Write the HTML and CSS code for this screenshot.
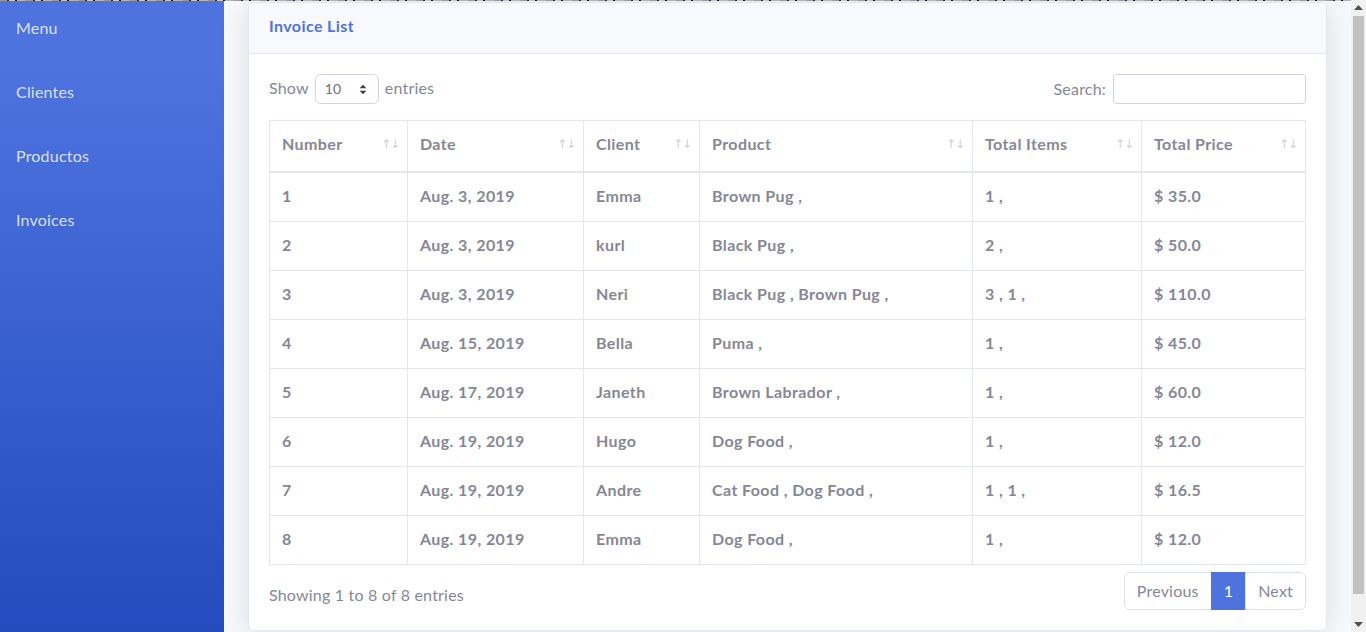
FILE: index.html
```html
<!DOCTYPE html>
<html lang="en">
<head>
<meta charset="utf-8">
<title>Invoice List</title>
<link rel="stylesheet" href="styles.css">
</head>
<body>
<div class="topline"></div>
<div class="viewport">
<div class="wrapper">
  <nav class="sidebar">
    <a class="nav-link" href="#">Menu</a>
    <a class="nav-link" href="#">Clientes</a>
    <a class="nav-link" href="#">Productos</a>
    <a class="nav-link" href="#">Invoices</a>
  </nav>
  <main class="content">
    <section class="card">
      <header class="card-header">Invoice List</header>
      <div class="card-body">
        <div class="dt-top">
          <label class="length">Show
            <span class="select"><span class="select-val">10</span>
              <svg width="8" height="11" viewBox="0 0 8 11"><path d="M4 0.8 L7.3 4.3 H0.7 Z M4 10.2 L7.3 6.7 H0.7 Z" fill="#3a3b45"/></svg>
            </span>
            entries</label>
          <label class="search">Search: <span class="input"></span></label>
        </div>
        <table class="table">
          <colgroup>
            <col class="w-num"><col class="w-date"><col class="w-client"><col class="w-prod"><col class="w-items"><col class="w-price">
          </colgroup>
          <thead>
            <tr>
              <th><div class="th-in"><span>Number</span><span class="sort">↑↓</span></div></th>
              <th><div class="th-in"><span>Date</span><span class="sort">↑↓</span></div></th>
              <th><div class="th-in"><span>Client</span><span class="sort">↑↓</span></div></th>
              <th><div class="th-in"><span>Product</span><span class="sort">↑↓</span></div></th>
              <th><div class="th-in"><span>Total Items</span><span class="sort">↑↓</span></div></th>
              <th><div class="th-in"><span>Total Price</span><span class="sort">↑↓</span></div></th>
            </tr>
          </thead>
          <tbody>
            <tr><td>1</td><td>Aug. 3, 2019</td><td>Emma</td><td>Brown Pug ,</td><td>1 ,</td><td>$ 35.0</td></tr>
            <tr><td>2</td><td>Aug. 3, 2019</td><td>kurl</td><td>Black Pug ,</td><td>2 ,</td><td>$ 50.0</td></tr>
            <tr><td>3</td><td>Aug. 3, 2019</td><td>Neri</td><td>Black Pug , Brown Pug ,</td><td>3 , 1 ,</td><td>$ 110.0</td></tr>
            <tr><td>4</td><td>Aug. 15, 2019</td><td>Bella</td><td>Puma ,</td><td>1 ,</td><td>$ 45.0</td></tr>
            <tr><td>5</td><td>Aug. 17, 2019</td><td>Janeth</td><td>Brown Labrador ,</td><td>1 ,</td><td>$ 60.0</td></tr>
            <tr><td>6</td><td>Aug. 19, 2019</td><td>Hugo</td><td>Dog Food ,</td><td>1 ,</td><td>$ 12.0</td></tr>
            <tr><td>7</td><td>Aug. 19, 2019</td><td>Andre</td><td>Cat Food , Dog Food ,</td><td>1 , 1 ,</td><td>$ 16.5</td></tr>
            <tr><td>8</td><td>Aug. 19, 2019</td><td>Emma</td><td>Dog Food ,</td><td>1 ,</td><td>$ 12.0</td></tr>
          </tbody>
        </table>
        <div class="dt-bottom">
          <div class="info">Showing 1 to 8 of 8 entries</div>
          <ul class="pagination">
            <li class="page disabled">Previous</li>
            <li class="page active">1</li>
            <li class="page disabled">Next</li>
          </ul>
        </div>
      </div>
    </section>
  </main>
</div>
<div class="scrollbar">
  <div class="sb-arrow"><svg width="9" height="5" viewBox="0 0 9 5"><path d="M4.5 0 L9 5 H0 Z" fill="#505050"/></svg></div>
  <div class="sb-track"><div class="sb-thumb"></div></div>
  <div class="sb-arrow"><svg width="9" height="5" viewBox="0 0 9 5"><path d="M0 0 H9 L4.5 5 Z" fill="#505050"/></svg></div>
</div>
</div>
</body>
</html>
```
FILE: styles.css
```css
html, body {
  margin: 0;
  padding: 0;
}
body {
  font-family: Lato, "Noto Sans", "Liberation Sans", sans-serif;
  font-size: 16px;
  line-height: 24px;
  letter-spacing: 0.2px;
  color: #858796;
  background: #f8f9fc;
}
.topline {
  position: absolute;
  top: 0;
  left: 0;
  right: 15px;
  height: 1px;
  z-index: 5;
  background: repeating-linear-gradient(90deg, #9a9a9a 0 7px, #2a2a2a 7px 9px, #c9c9c9 9px 15px, #111 15px 17px, #b5b5b5 17px 26px);
}
.viewport {
  display: flex;
  align-items: flex-start;
}
.wrapper {
  flex: 1;
  display: flex;
  min-height: 655px;
  min-width: 0;
}
.sidebar {
  width: 224px;
  flex: none;
  display: flex;
  flex-direction: column;
  background: linear-gradient(180deg, #4e73df 10%, #224abe 100%);
}
.nav-link {
  display: block;
  padding: 16px 16px 24px;
  color: rgba(255, 255, 255, 0.8);
  text-decoration: none;
  font-size: 16px;
}
.content {
  flex: 1;
  padding: 2px 24px 24px;
  min-width: 0;
}
.card {
  background: #fff;
  border: 1px solid #e3e6f0;
  border-radius: 5.6px;
  box-shadow: 0 2.4px 28px 0 rgba(58, 59, 69, 0.15);
  overflow: hidden;
}
.card-header {
  background: #f8f9fc;
  border-bottom: 1px solid #e3e6f0;
  padding: 11px 20px 15px;
  color: #4e73df;
  font-weight: 700;
  font-size: 16px;
  letter-spacing: 0.4px;
}
.card-body {
  padding: 20px;
}
.dt-top {
  display: flex;
  justify-content: space-between;
  align-items: center;
  height: 30px;
  margin-bottom: 16px;
}
.length, .search {
  display: flex;
  align-items: center;
  gap: 6px;
  margin-top: -2px;
}
.search { gap: 7px; margin-top: 0; }
.select {
  display: inline-flex;
  align-items: center;
  justify-content: space-between;
  box-sizing: border-box;
  width: 64px;
  height: 30px;
  margin-top: 2px;
  padding: 0 11px 0 9px;
  border: 1px solid #d1d3e2;
  border-radius: 5.6px;
  color: #6e707e;
  font-size: 14px;
}
.input {
  display: block;
  box-sizing: border-box;
  width: 193px;
  height: 30px;
  border: 1px solid #d1d3e2;
  border-radius: 3.2px;
}
.table {
  width: 100%;
  table-layout: fixed;
  border-collapse: collapse;
  border: 1px solid #e3e6f0;
}
.w-num { width: 138px; }
.w-date { width: 176px; }
.w-client { width: 116px; }
.w-prod { width: 273px; }
.w-items { width: 169px; }
.w-price { width: 164px; }
.table th, .table td {
  border: 1px solid #e3e6f0;
  padding: 11px 12px 13px;
  text-align: left;
  font-weight: 700;
  letter-spacing: 0.4px;
  white-space: nowrap;
}
.table thead th {
  border-bottom-width: 2px;
  padding: 11px 8px 15px 12px;
}
.th-in {
  display: flex;
  justify-content: space-between;
  align-items: center;
}
.sort {
  font-family: "DejaVu Sans", sans-serif;
  font-weight: 400;
  font-size: 12px;
  letter-spacing: -1px;
  color: #cfd0d6;
}
.dt-bottom {
  display: flex;
  justify-content: space-between;
  align-items: flex-start;
  margin-top: 7px;
}
.info {
  padding-top: 11px;
}
.pagination {
  display: flex;
  list-style: none;
  margin: 0;
  padding: 0;
}
.page {
  padding: 6px 12px;
  line-height: 24px;
  border: 1px solid #dddfeb;
  margin-left: -1px;
  color: #858796;
  background: #fff;
}
.page:first-child {
  border-radius: 5.6px 0 0 5.6px;
  margin-left: 0;
}
.page:last-child {
  border-radius: 0 5.6px 5.6px 0;
}
.page.active {
  background: #4e73df;
  border-color: #4e73df;
  color: #fff;
}
.scrollbar {
  width: 15px;
  height: 632px;
  flex: none;
  display: flex;
  flex-direction: column;
  background: #f1f1f1;
}
.sb-arrow {
  height: 15px;
  display: flex;
  align-items: center;
  justify-content: center;
}
.sb-track {
  flex: 1;
  padding: 1px 2px;
}
.sb-thumb {
  height: 578px;
  background: #c1c1c1;
}
```
